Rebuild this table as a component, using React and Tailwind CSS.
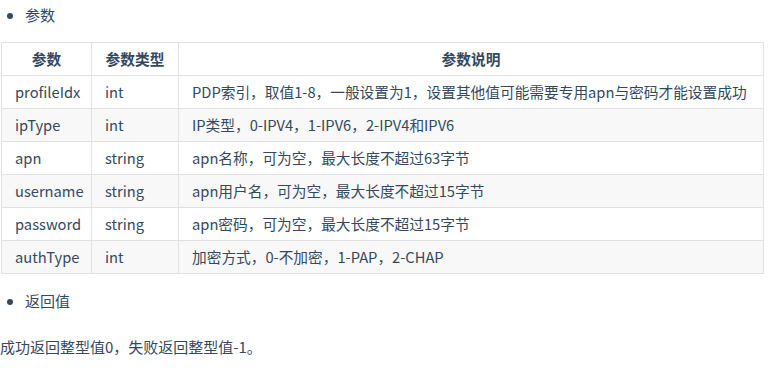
import React from "react";

const rows = [
  ["profileIdx", "int", "PDP索引，取值1-8，一般设置为1，设置其他值可能需要专用apn与密码才能设置成功"],
  ["ipType", "int", "IP类型，0-IPV4，1-IPV6，2-IPV4和IPV6"],
  ["apn", "string", "apn名称，可为空，最大长度不超过63字节"],
  ["username", "string", "apn用户名，可为空，最大长度不超过15字节"],
  ["password", "string", "apn密码，可为空，最大长度不超过15字节"],
  ["authType", "int", "加密方式，0-不加密，1-PAP，2-CHAP"],
];

export default function App() {
  return (
    <div
      className="w-[771px] h-[371px] bg-white text-[15px] leading-[22px] text-[#34495e] overflow-hidden"
      style={{ fontFamily: '"Noto Sans CJK SC", "Noto Sans", sans-serif' }}
    >
      <ul className="list-disc pl-[25px] mt-[4px]">
        <li>参数</li>
      </ul>

      {/* 参数表 */}
      <table className="ml-px mt-[16px] w-[763px] border-collapse table-fixed whitespace-nowrap text-[14.7px]">
        <thead>
          <tr>
            <th className="w-[90px] h-[33px] border border-[#dfe2e5] font-bold text-center">参数</th>
            <th className="w-[87px] h-[33px] border border-[#dfe2e5] font-bold text-center">参数类型</th>
            <th className="h-[33px] border border-[#dfe2e5] font-bold text-center">参数说明</th>
          </tr>
        </thead>
        <tbody>
          {rows.map((r, i) => (
            <tr key={r[0]} className={i % 2 === 0 ? "bg-white" : "bg-[#f8f8f8]"}>
              <td className="h-[33px] border border-[#dfe2e5] px-[13px]">{r[0]}</td>
              <td className="h-[33px] border border-[#dfe2e5] px-[13px]">{r[1]}</td>
              <td className="h-[33px] border border-[#dfe2e5] px-[13px]">{r[2]}</td>
            </tr>
          ))}
        </tbody>
      </table>

      <ul className="list-disc pl-[25px] mt-[16px]">
        <li>返回值</li>
      </ul>
      <p className="mt-[24px]">成功返回整型值0，失败返回整型值-1。</p>
    </div>
  );
}
